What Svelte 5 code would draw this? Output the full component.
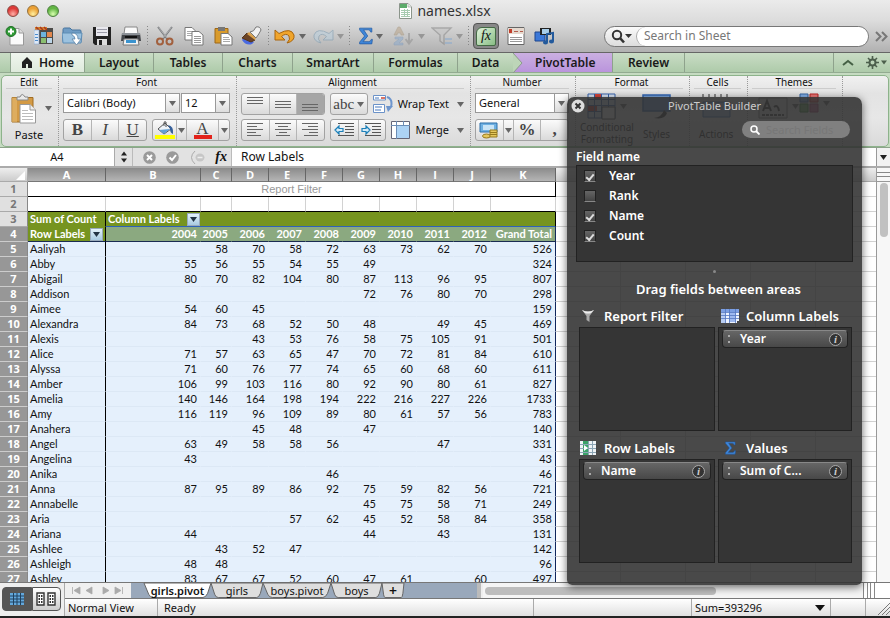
<script>
  const years = ['2004', '2005', '2006', '2007', '2008', '2009', '2010', '2011', '2012'];
  const letters = ['A', 'B', 'C', 'D', 'E', 'F', 'G', 'H', 'I', 'J', 'K'];
  const data = [
    ['Aaliyah', '', 58, 70, 58, 72, 63, 73, 62, 70, 526],
    ['Abby', 55, 56, 55, 54, 55, 49, '', '', '', 324],
    ['Abigail', 80, 70, 82, 104, 80, 87, 113, 96, 95, 807],
    ['Addison', '', '', '', '', '', 72, 76, 80, 70, 298],
    ['Aimee', 54, 60, 45, '', '', '', '', '', '', 159],
    ['Alexandra', 84, 73, 68, 52, 50, 48, '', 49, 45, 469],
    ['Alexis', '', '', 43, 53, 76, 58, 75, 105, 91, 501],
    ['Alice', 71, 57, 63, 65, 47, 70, 72, 81, 84, 610],
    ['Alyssa', 71, 60, 76, 77, 74, 65, 60, 68, 60, 611],
    ['Amber', 106, 99, 103, 116, 80, 92, 90, 80, 61, 827],
    ['Amelia', 140, 146, 164, 198, 194, 222, 216, 227, 226, 1733],
    ['Amy', 116, 119, 96, 109, 89, 80, 61, 57, 56, 783],
    ['Anahera', '', '', 45, 48, '', 47, '', '', '', 140],
    ['Angel', 63, 49, 58, 58, 56, '', '', 47, '', 331],
    ['Angelina', 43, '', '', '', '', '', '', '', '', 43],
    ['Anika', '', '', '', '', 46, '', '', '', '', 46],
    ['Anna', 87, 95, 89, 86, 92, 75, 59, 82, 56, 721],
    ['Annabelle', '', '', '', '', '', 45, 75, 58, 71, 249],
    ['Aria', '', '', '', 57, 62, 45, 52, 58, 84, 358],
    ['Ariana', 44, '', '', '', '', 44, '', 43, '', 131],
    ['Ashlee', '', 43, 52, 47, '', '', '', '', '', 142],
    ['Ashleigh', 48, 48, '', '', '', '', '', '', '', 96],
    ['Ashley', 83, 67, 67, 52, 60, 47, 61, '', 60, 497]
  ];
  const widths = [28, 78, 95, 31, 37, 37, 37, 37, 37, 37, 37, 65];
  const spare = [1, 2, 3, 4, 5];
  const tabs = [
    { name: 'Layout', w: 69 },
    { name: 'Tables', w: 69 },
    { name: 'Charts', w: 70 },
    { name: 'SmartArt', w: 81 },
    { name: 'Formulas', w: 84 }
  ];
  let fields = $state([
    { name: 'Year', on: true },
    { name: 'Rank', on: false },
    { name: 'Name', on: true },
    { name: 'Count', on: true }
  ]);
  const areas = [
    { name: 'Report Filter', icon: 'filter', item: '' },
    { name: 'Column Labels', icon: 'cols', item: 'Year' },
    { name: 'Row Labels', icon: 'rows', item: 'Name' },
    { name: 'Values', icon: 'sigma', item: 'Sum of C...' }
  ];
  const sheets = [
    { name: 'girls.pivot', w: 67 },
    { name: 'girls', w: 52 },
    { name: 'boys.pivot', w: 68 },
    { name: 'boys', w: 51 },
    { name: '+', w: 22 }
  ];
</script>

{#snippet arrow()}
  <svg class="arrow" width="7" height="5" viewBox="0 0 7 5"><path d="M0 0H7L3.500 5Z" fill="currentColor" /></svg>
{/snippet}

{#snippet lines(rows)}
  <svg width="18" height="16" viewBox="0 0 18 16">
    {#each rows as r}<path d="M{r[0]} {r[1]}.5h{r[2]}" stroke="#666" />{/each}
  </svg>
{/snippet}

{#snippet sigma(w, h)}
  <svg width={w} height={h} viewBox="0 0 12 16" preserveAspectRatio="none">
    <path d="M.5 1H11V4.500H10Q9.500 2.500 8 2.500H4L7.500 8L3.500 13H8.500Q10 13 10.500 11H11.500L11 15H.5V13.500L4.800 8L.5 2.500Z" fill="#3f86d8" stroke="#1e569f" stroke-width=".6" />
  </svg>
{/snippet}

<div class="app">
  <header class="chrome">
    <div class="titlebar">
      <div class="lights">
        <button class="light red" aria-label="Close"></button>
        <button class="light amber" aria-label="Minimise"></button>
        <button class="light green" aria-label="Zoom"></button>
      </div>
      <div class="title">
        <svg width="13" height="16" viewBox="0 0 13 16"><path d="M1 .5H9L12.500 4V15.500H.5V.5Z" fill="#fff" stroke="#8b958b" /><path d="M1 1H8V5H1Z" fill="#5cab6a" /><path d="M2 7.500H11M2 9.500H11M2 11.500H11M2 13.500H11M5.500 6V14M8.500 6V14" stroke="#a7cbb0" /><path d="M9 .5V4H12.500" fill="#e8eee8" stroke="#999" stroke-width=".6" /></svg>
        <span>names.xlsx</span>
      </div>
    </div>

    <div class="toolbar">
      <button class="tool" aria-label="New"><svg width="20" height="20" viewBox="0 0 20 20"><path d="M5 2.500H14L18.500 7V19H5Z" fill="#fbfbfb" stroke="#999" /><path d="M14 2.500V7H18.500" fill="#ddd" stroke="#999" /><circle cx="6" cy="5.500" r="5" fill="#2f9a35" stroke="#1f6f25" /><path d="M6 2.500V8.500M3 5.500H9" stroke="#fff" stroke-width="2" /></svg></button>
      <button class="tool" aria-label="Gallery"><svg width="20" height="20" viewBox="0 0 20 20"><path d="M1 2H19V18H1Z" fill="#4c4b49" /><path d="M1 1H13V4H1Z" fill="#d7852b" /><path d="M2 1L5 4M6 1L9 4M10 1L13 4" stroke="#a73720" stroke-width="1.500" /><path d="M0 4H5V18H0Z" fill="#dfe9f5" stroke="#86a6cc" stroke-width=".6" /><path d="M1 8.500H4M1 11.500H4M1 14.500H4" stroke="#4d8ccc" /><path d="M7 6H12V11H7Z" fill="#6db4de" /><path d="M13 6H18V11H13Z" fill="#e3874d" /><path d="M7 12H12V17H7Z" fill="#8abf70" /><path d="M13 12H18V17H13Z" fill="#bcd5e8" /></svg></button>
      <button class="tool" aria-label="Open"><svg width="21" height="20" viewBox="0 0 21 20"><path d="M1 3.500Q1 2 2.500 2H8L10 4H18Q19 4 19 5V16H2Q1 16 1 15Z" fill="#6f9cc4" stroke="#48759e" /><path d="M0 7H20L19 17H1Z" fill="#9cc2df" stroke="#5d8db5" /><path d="M10 7Q16 7 16 13H19L14.500 19L10 13H13Q13 10 10 9Z" fill="#fff" stroke="#517a9f" stroke-width=".7" /></svg></button>
      <button class="tool" aria-label="Save"><svg width="20" height="20" viewBox="0 0 20 20"><path d="M1 1H19V19H3L1 17Z" fill="#222" /><path d="M4 1H16V10H4Z" fill="#e8e8ee" /><path d="M5 3.500H15M5 6.500H15" stroke="#9b9ba8" /><path d="M5 13H15V19H5Z" fill="#ddd" /><path d="M7 14H10V19H7Z" fill="#222" /></svg></button>
      <button class="tool" aria-label="Print"><svg width="20" height="20" viewBox="0 0 20 20"><path d="M4 1H16L17 8H3Z" fill="#fafafa" stroke="#888" /><path d="M1 7H19L20 15H0Z" fill="#44474b" /><path d="M1 7H19V9H1Z" fill="#8c9197" /><path d="M4 10H16V12H4Z" fill="#111" /><path d="M3 13H17L18 19H2Z" fill="#f4f4f4" stroke="#777" /><path d="M5 14H15V17H5Z" fill="#3a93cf" /></svg></button>
      <span class="sep"></span>
      <button class="tool" aria-label="Cut"><svg width="20" height="20" viewBox="0 0 20 20"><path d="M3 1L13 14M17 1L7 14" stroke="#77797c" stroke-width="1.800" /><path d="M3.500 1.500L12 12M16.500 1.500L8 12" stroke="#ddd" stroke-width=".5" /><circle cx="5" cy="15.500" r="3" fill="none" stroke="#a2603e" stroke-width="2" /><circle cx="14.500" cy="15.500" r="3" fill="none" stroke="#a2603e" stroke-width="2" /></svg></button>
      <button class="tool" aria-label="Copy"><svg width="20" height="20" viewBox="0 0 20 20"><path d="M1 1.500H8L11 4.500V14H1Z" fill="#fff" stroke="#777" /><path d="M3 5.500H9M3 7.500H9M3 9.500H9" stroke="#aaa" /><path d="M8 5.500H15L19 9V19H8Z" fill="#fff" stroke="#777" /><path d="M10 10.500H17M10 12.500H17M10 14.500H17M10 16.500H17" stroke="#999" /></svg></button>
      <button class="tool" aria-label="Paste"><svg width="20" height="20" viewBox="0 0 20 20"><path d="M2 2.500H15V17H2Z" fill="#d99b2b" stroke="#9c6718" /><path d="M5 1H12V5H5Z" fill="#777" /><path d="M8 7.500H15L19 11V19H8Z" fill="#fff" stroke="#777" /><path d="M10 11.500H16M10 13.500H17M10 15.500H17" stroke="#aaa" /></svg></button>
      <button class="tool" aria-label="Format painter"><svg width="21" height="20" viewBox="0 0 21 20"><path d="M3 11L13 16L11 18Q5 20 1 14Z" fill="#4a6ae0" /><path d="M6 7L14 14L10 16L1 12Z" fill="#6b4426" stroke="#55351b" /><path d="M8 6L15 12L14 14L6 8Z" fill="#d9a04c" /><path d="M9 6Q13 6 15 1Q19 0 20 4Q18 8 15 12Z" fill="#f1f1f1" stroke="#777" /></svg></button>
      <span class="sep"></span>
      <button class="tool drop" aria-label="Undo"><svg width="22" height="20" viewBox="0 0 22 20"><path d="M1 4V14H11L7.500 10.500Q12 6.500 15 10Q17 13 13 17Q21 15 20 9Q17 1 5 7.500Z" fill="#f0a52c" stroke="#a9640d" /></svg>{@render arrow()}</button>
      <button class="tool drop faded" aria-label="Redo"><svg width="22" height="20" viewBox="0 0 22 20"><path d="M21 4V14H11L14.500 10.500Q10 6.500 7 10Q5 13 9 17Q1 15 2 9Q5 1 17 7.500Z" fill="#b9d0e0" stroke="#7395ad" /></svg>{@render arrow()}</button>
      <span class="sep"></span>
      <button class="tool drop" aria-label="AutoSum">{@render sigma(14, 18)}{@render arrow()}</button>
      <button class="tool drop faded" aria-label="Sort"><svg width="22" height="20" viewBox="0 0 22 20"><path d="M1 9L5 1H7L11 9H8L7.500 7H4.500L4 9Z" fill="#b8a184" stroke="#93805f" stroke-width=".6" /><path d="M2 11H10V13L6 17H10V19H1V17L6 13H2Z" fill="#89a9cd" stroke="#6d8fb5" stroke-width=".6" /><path d="M16 7V17M12.500 13L16 17.500L19.500 13" stroke="#8c8c8c" stroke-width="2" fill="none" /></svg>{@render arrow()}</button>
      <button class="tool drop faded" aria-label="Filter"><svg width="22" height="20" viewBox="0 0 22 20"><path d="M1 2H20L13 9V18L9 15V9Z" fill="#c4c4c4" stroke="#808080" stroke-width="1.400" /><path d="M14 13H21M14 17H21" stroke="#86a9cf" stroke-width="2" /></svg>{@render arrow()}</button>
      <span class="sep"></span>
      <button class="fxbtn" aria-label="Formula builder"><span>fx</span></button>
      <button class="tool" aria-label="Toolbox"><svg width="18" height="20" viewBox="0 0 18 20"><path d="M1 1.500H17V18.500H1Z" fill="#fff" stroke="#666" /><path d="M1 2H17V8H1Z" fill="#e5d9cf" /><path d="M2 3H5V7H2Z" fill="#c33f2c" /><path d="M7 5H11V6H7ZM13 5H16V6H13Z" fill="#b15c4c" /><path d="M3 11.500H15M3 13.500H15M3 15.500H15" stroke="#999" /></svg></button>
      <button class="tool" aria-label="Media browser"><svg width="21" height="20" viewBox="0 0 21 20"><path d="M1 6H11V15H1Z" fill="#3b78d8" stroke="#1d448c" /><path d="M6 2H17V9H6Z" fill="#222" /><path d="M8 3H15V8H8Z" fill="#a8cde8" /><path d="M13 16V8L19 7V15" stroke="#235a9c" stroke-width="2" fill="none" /><ellipse cx="11.500" cy="16.500" rx="2.500" ry="2" fill="#235a9c" /><ellipse cx="17.500" cy="15.500" rx="2.500" ry="2" fill="#235a9c" /></svg></button>
      <div class="search">
        <button class="mag" aria-label="Search options"><svg width="22" height="15" viewBox="0 0 22 15"><circle cx="6" cy="6" r="4.200" fill="none" stroke="#333" stroke-width="2" /><path d="M9 9L13 13.500" stroke="#333" stroke-width="2.600" /><path d="M14 5H21L17.500 9Z" fill="#333" /></svg></button>
        <input placeholder="Search in Sheet" aria-label="Search in Sheet" />
      </div>
      <button class="more" aria-label="More tools"><svg width="13" height="11" viewBox="0 0 13 11"><path d="M1 1L5.500 5.500L1 10M7 1L11.500 5.500L7 10" fill="none" stroke="#777" stroke-width="2" /></svg></button>
    </div>
  </header>

  <nav class="tabs">
    <span class="tabpad"></span>
    <button class="tab home"><svg width="12" height="11" viewBox="0 0 12 11"><path d="M6 0L11 5V11H7V7H5V11H1V5Z" fill="#222" /></svg>Home</button>
    {#each tabs as t}<button class="tab" style="width:{t.w}px">{t.name}</button>{/each}
    <button class="tab data">Data</button>
    <button class="tab pivot"><svg width="12" height="20" viewBox="0 0 12 20"><path d="M0 0L9 10L0 20Z" fill="#bdd5b8" /><path d="M0 0L9 10L0 20" fill="none" stroke="#8b9b8b" /></svg>PivotTable</button>
    <button class="tab review">Review</button>
    <div class="tabtools">
      <button aria-label="Collapse ribbon"><svg width="12" height="8" viewBox="0 0 12 8"><path d="M1 6L6 2L11 6" fill="none" stroke="#456045" stroke-width="2" /></svg></button>
      <button aria-label="Ribbon settings"><svg width="22" height="13" viewBox="0 0 22 13"><circle cx="6.500" cy="6.500" r="3" fill="none" stroke="#4c5f4c" stroke-width="2" /><path d="M6.500 0V3M6.500 10V13M0 6.500H3M10 6.500H13M2 2L4 4M9 9L11 11M11 2L9 4M4 9L2 11" stroke="#4c5f4c" stroke-width="1.600" /><path d="M15 4.500H21L18 8.500Z" fill="#4c5f4c" /></svg></button>
    </div>
  </nav>

  <section class="ribbonwrap">
    <div class="ribbon">
      <div class="group edit">
        <h2>Edit</h2>
        <button class="paste">
          <span class="pasteicon"><svg width="26" height="31" viewBox="0 0 26 31"><path d="M1 4.500H22V29H1Z" fill="#d39a45" stroke="#a06c22" /><path d="M1 4.500H6V29H1Z" fill="#e6bb72" opacity=".6" /><path d="M6 7V4H9Q11 -1 14 4H17V7Z" fill="#e9e9e9" stroke="#888" /><path d="M9 11.500H19L24.500 17V30H9Z" fill="#fff" stroke="#999" /><path d="M19 11.500V17H24.500" fill="#eee" stroke="#999" /><path d="M11 17.500H17M11 20.500H22M11 23.500H22M11 26.500H22" stroke="#bbb" /></svg>{@render arrow()}</span>
          <span>Paste</span>
        </button>
      </div>
      <div class="group font">
        <h2>Font</h2>
        <div class="row">
          <label class="combo grow"><select aria-label="Font name"><option>Calibri (Body)</option></select><span>{@render arrow()}</span></label>
          <label class="combo size"><select aria-label="Font size"><option>12</option></select><span>{@render arrow()}</span></label>
        </div>
        <div class="row wide">
          <div class="seg three"><button class="ser"><b>B</b></button><button class="ser"><i>I</i></button><button class="ser"><u>U</u></button></div>
          <div class="seg paint">
            <button aria-label="Fill colour"><svg width="20" height="20" viewBox="0 0 20 20"><path d="M3 9L10 3L16 9L9 14Z" fill="#eef3f8" stroke="#555" /><path d="M4 10L15 9L9 14Z" fill="#63a0d4" /><path d="M9 6V3Q9 1 11 2V7" fill="none" stroke="#555" /><path d="M13 5Q19 6 18 14Q15 13 15 9Z" fill="#355f99" /><path d="M0 15H20V19H0Z" fill="#ffff00" /></svg></button>
            <button class="thin" aria-label="Fill colour menu">{@render arrow()}</button>
            <button class="ser acol" aria-label="Font colour">A</button>
            <button class="thin" aria-label="Font colour menu">{@render arrow()}</button>
          </div>
        </div>
      </div>
      <div class="group align">
        <h2>Alignment</h2>
        <div class="row wide">
          <div class="seg three">
            <button aria-label="Top">{@render lines([[1, 1, 16], [1, 4, 16], [1, 7, 16]])}</button>
            <button aria-label="Middle">{@render lines([[1, 5, 16], [1, 8, 16], [1, 11, 16]])}</button>
            <button class="on" aria-label="Bottom">{@render lines([[1, 8, 16], [1, 11, 16], [1, 14, 16]])}</button>
          </div>
          <div class="seg abc"><button class="ser">abc{@render arrow()}</button></div>
          <button class="flat"><svg width="20" height="20" viewBox="0 0 20 20"><path d="M.5 1.500H12.500V6H.5ZM.5 10.500H11.500V18.500H.5Z" fill="#fff" stroke="#6b92c8" /><path d="M2 4H6M2 13H9M2 16H8" stroke="#4678be" /><path d="M8 4H12" stroke="#d0452f" stroke-width="1.500" /><path d="M14 3Q20 5 18 13" fill="none" stroke="#6d95cd" stroke-width="2" /><path d="M13 12H20L15 18Z" fill="#6d95cd" /></svg>Wrap Text{@render arrow()}</button>
        </div>
        <div class="row wide">
          <div class="seg three">
            <button aria-label="Left">{@render lines([[1, 1, 16], [1, 4, 10], [1, 7, 16], [1, 10, 9], [1, 13, 14]])}</button>
            <button aria-label="Center">{@render lines([[1, 1, 16], [4, 4, 10], [1, 7, 16], [5, 10, 8], [2, 13, 14]])}</button>
            <button aria-label="Right">{@render lines([[1, 1, 16], [7, 4, 10], [1, 7, 16], [8, 10, 9], [3, 13, 14]])}</button>
          </div>
          <div class="seg two">
            {#each [0, 1] as k}
              <button aria-label={k ? 'Increase indent' : 'Decrease indent'}><svg width="21" height="16" viewBox="0 0 21 16"><path d="M4 1.500H20M11 4.500H20M11 7.500H20M11 10.500H20M4 13.500H20" stroke="#555" /><path d={k ? 'M9 8L5 4V6.500H1V9.500H5V12Z' : 'M1 8L5 4V6.500H9V9.500H5V12Z'} fill="#d6ecf8" stroke="#1d80b9" stroke-width="1.200" /></svg></button>
            {/each}
          </div>
          <button class="flat merge"><svg width="19" height="18" viewBox="0 0 19 18"><path d="M.5 .5H18.500V17.500H.5Z" fill="#fff" stroke="#667" /><path d="M6 5H18V17H6Z" fill="#add3f5" /><path d="M5.500 0V18M0 4.500H19M12.500 0V4" stroke="#6c8db5" /></svg>Merge{@render arrow()}</button>
        </div>
      </div>
      <div class="group number">
        <h2>Number</h2>
        <div class="row"><label class="combo grow"><select aria-label="Number format"><option>General</option></select><span>{@render arrow()}</span></label></div>
        <div class="row">
          <div class="seg num">
            <button aria-label="Currency"><svg width="20" height="17" viewBox="0 0 20 17"><path d="M1 1H18V10H1Z" fill="#6fb1e3" stroke="#2d6ea8" /><path d="M4 3H15V8H4Z" fill="#c9e4f6" /><ellipse cx="7.500" cy="14" rx="4" ry="2" fill="#e4c75c" stroke="#967a1e" /><path d="M11 8V15H18V8Z" fill="#e4c75c" stroke="#967a1e" /><path d="M11 10.500H18M11 12.500H18" stroke="#967a1e" /></svg></button>
            <button class="thin" aria-label="Currency menu">{@render arrow()}</button>
            <button class="ser">%</button><button class="ser">,</button>
          </div>
        </div>
      </div>
      <div class="group format">
        <h2>Format</h2>
        <div class="bigs">
          <button class="big"><span><svg width="29" height="27" viewBox="0 0 29 27"><path d="M1 1H28V25H1Z" fill="#dce8f8" stroke="#3763ac" /><path d="M7 1H14V6H7ZM1 12H10V18H1Z" fill="#d6443a" /><path d="M1 6.500H28M1 12.500H28M1 18.500H28M7.500 1V25M14.500 1V25M21.500 1V25" stroke="#3763ac" /><path d="M15 14H28V26H15Z" fill="#fff" stroke="#444" /></svg>{@render arrow()}</span>Conditional<br />Formatting</button>
          <button class="big"><svg width="29" height="27" viewBox="0 0 29 27"><path d="M1 2H28V18H1Z" fill="#7aa6de" stroke="#3367b5" stroke-width="1.500" /><path d="M12 25Q20 24 22 17L25 20Q23 27 12 25Z" fill="#333" /></svg><em>Styles</em></button>
        </div>
      </div>
      <div class="group cells">
        <h2>Cells</h2>
        <div class="bigs"><button class="big"><svg width="29" height="27" viewBox="0 0 29 27"><path d="M1 1V4M7 1V4M13 1V4M19 1V4M25 1V4" stroke="#333" /><path d="M1 9H28V24H1Z" fill="#a8c6ec" stroke="#3a6cb5" /></svg><em>Actions</em></button></div>
      </div>
      <div class="group themes">
        <h2>Themes</h2>
        <div class="bigs gap">
          <button class="big" aria-label="Themes"><span><svg width="30" height="27" viewBox="0 0 30 27"><path d="M1 5H29V25H1Z" fill="#ddd" stroke="#777" /><path d="M5 18L9 8L13 18M7 15H11M16 14Q20 11 21 18" fill="none" stroke="#333" stroke-width="2" /><path d="M4 22H26" stroke="#444" stroke-dasharray="3 1" stroke-width="2" /></svg>{@render arrow()}</span></button>
          <button class="big" aria-label="Colors"><span><svg width="20" height="20" viewBox="0 0 20 20"><path d="M1 1H9V9H1Z" fill="#85b3ed" stroke="#3465a4" /><path d="M11 1H19V9H11Z" fill="#ef7979" stroke="#b22" /><path d="M1 11H9V19H1Z" fill="#75b96b" stroke="#373" /><path d="M11 11H19V19H11Z" fill="#d06d9d" stroke="#a33b68" /></svg>{@render arrow()}</span></button>
        </div>
      </div>
    </div>
  </section>

  <div class="formula">
    <input class="namebox" value="A4" aria-label="Name box" />
    <div class="stepper"><svg width="6" height="12" viewBox="0 0 6 12"><path d="M0 4.500L3 .5L6 4.500ZM0 7.500L3 11.500L6 7.500Z" fill="#222" /></svg></div>
    <div class="fxtools">
      <svg width="13" height="13" viewBox="0 0 13 13"><circle cx="6.500" cy="6.500" r="6.300" fill="#9a9a9a" /><path d="M4 4L9 9M9 4L4 9" stroke="#fff" stroke-width="2" /></svg>
      <svg width="13" height="13" viewBox="0 0 13 13"><circle cx="6.500" cy="6.500" r="6.300" fill="#9a9a9a" /><path d="M3.500 6.500L6 9L10 4" stroke="#fff" stroke-width="2" fill="none" /></svg>
      <svg width="15" height="15" viewBox="0 0 15 15"><path d="M5 1Q-2 7.500 5 14" fill="none" stroke="#aaa" /><ellipse cx="10" cy="7.500" rx="4.500" ry="4" fill="#c6c6c6" /><path d="M7.500 7.500H12.500" stroke="#eee" stroke-width="1.500" /></svg>
      <span class="fx">fx</span>
    </div>
    <input class="fbox" value="Row Labels" aria-label="Formula" />
    <button class="fdrop" aria-label="Expand formula bar">{@render arrow()}</button>
  </div>

  <main class="sheet">
    <div class="gridwrap">
      <table>
        <colgroup>
          {#each widths as w}<col style="width:{w}px" />{/each}
          {#each spare as s}<col style="width:65px" />{/each}
        </colgroup>
        <thead>
          <tr><th class="corner"><svg width="9" height="9" viewBox="0 0 9 9"><path d="M9 0V9H0Z" fill="#fff" /></svg></th>{#each letters as l}<th>{l}</th>{/each}{#each spare as s}<th class="plain"></th>{/each}</tr>
        </thead>
        <tbody>
          <tr class="r1"><th>1</th><td colspan="11">Report Filter</td>{#each spare as s}<td></td>{/each}</tr>
          <tr class="r2"><th>2</th>{#each letters as l}<td></td>{/each}{#each spare as s}<td></td>{/each}</tr>
          <tr class="r3"><th>3</th><td class="hd sum">Sum of Count</td><td class="hd span" colspan="10"><span class="lab med">Column Labels<button class="dd" aria-label="Column filter">{@render arrow()}</button></span></td>{#each spare as s}<td></td>{/each}</tr>
          <tr class="r4"><th>4</th><td class="hd first"><span class="lab">Row Labels<button class="dd" aria-label="Row filter">{@render arrow()}</button></span></td>{#each years as y}<td class="yr">{y}</td>{/each}<td class="yr last">Grand Total</td>{#each spare as s}<td></td>{/each}</tr>
          {#each data as row, i}
            <tr class="d"><th>{i + 5}</th>{#each row as v, j}<td class:name={j === 0} class:last={j === 10} class="v">{v}</td>{/each}{#each spare as s}<td></td>{/each}</tr>
          {/each}
        </tbody>
      </table>
    </div>
    <div class="vscroll"><div class="vsplit"></div><div class="thumb"></div></div>
  </main>

  <footer>
    <div class="views">
      <button class="on" aria-label="Normal view"><svg width="16" height="14" viewBox="0 0 16 14"><path d="M1 1H15V13H1Z" fill="#63a8dc" /><path d="M1 4H15M1 7H15M1 10H15M4.500 1V13M8 1V13M11.500 1V13" stroke="#20415f" /></svg></button>
      <button aria-label="Page layout view"><svg width="20" height="14" viewBox="0 0 20 14"><path d="M1 1H8V13H1ZM12 1H19V13H12Z" fill="#fff" stroke="#333" stroke-width="1.400" /><path d="M2.500 4H7M2.500 7H7M2.500 10H7M13.500 4H18M13.500 7H18M13.500 10H18" stroke="#333" stroke-width="2" stroke-dasharray="1.500 1" /></svg></button>
    </div>
    <div class="bottom">
      <div class="sheetbar">
        <div class="sheetnav"><svg width="54" height="9" viewBox="0 0 54 9"><path d="M1.500 1V8M9 1V8L3 4.500ZM21 1V8L15 4.500ZM32 1V8L38 4.500ZM44 1V8L50 4.500ZM51.500 1V8" fill="#aaa" stroke="#aaa" stroke-width=".8" /></svg></div>
        <div class="sheettabs">
          {#each sheets as s, i}
            <button class:cur={i === 0} class:plus={i === 4} style="width:{s.w}px"><svg viewBox="0 0 100 16" preserveAspectRatio="none"><path d="M0 0L7 12Q9 15.500 14 15.500H88Q92 15.500 95 11L100 0Z" fill={i === 0 ? '#fff' : '#dedede'} stroke="#666" vector-effect="non-scaling-stroke" /></svg><span>{s.name}</span></button>
          {/each}
        </div>
        <div class="hsplit"></div>
        <div class="hscroll"><div class="hthumb"></div></div>
        <div class="hgrip"></div>
        <div class="hend"></div>
      </div>
      <div class="status">
        <span class="s1">Normal View</span><span class="s2">Ready</span><span class="s3"></span>
        <label class="s4"><select aria-label="Summary"><option>Sum=393296</option></select><svg width="10" height="6" viewBox="0 0 10 6"><path d="M0 0H10L5 6Z" fill="#111" /></svg></label>
        <span class="s5"></span>
        <span class="s6"><svg width="12" height="12" viewBox="0 0 12 12"><path d="M0 12L12 0M4 12L12 4M8 12L12 8" stroke="#777" /></svg></span>
      </div>
    </div>
  </footer>
  <div class="desk"></div>

  <aside class="panel">
    <div class="ptitle">
      <button aria-label="Close builder"><svg width="14" height="14" viewBox="0 0 14 14"><circle cx="7" cy="7" r="6.500" fill="#ddd" /><path d="M4.500 4.500L9.500 9.500M9.500 4.500L4.500 9.500" stroke="#333" stroke-width="2" /></svg></button>
      <h1>PivotTable Builder</h1>
    </div>
    <label class="psearch"><svg width="10" height="10" viewBox="0 0 10 10"><circle cx="4" cy="4" r="3" fill="none" stroke="#fff" stroke-width="1.500" /><path d="M6 6L9.500 9.500" stroke="#fff" stroke-width="1.800" /></svg><input placeholder="Search Fields" aria-label="Search fields" /></label>
    <h3>Field name</h3>
    <div class="fields">
      {#each fields as f}
        <label><input type="checkbox" bind:checked={f.on} /><span>{f.name}</span></label>
      {/each}
    </div>
    <div class="dot"></div>
    <p>Drag fields between areas</p>
    <div class="areas">
      {#each areas as a}
        <div class="area">
          <h4>
            {#if a.icon === 'filter'}<svg width="18" height="16" viewBox="0 0 18 16"><path d="M3 2Q9 5 15 2L10.500 8V14L7.500 12V8Z" fill="#aaa" /><path d="M3 2Q9 5 15 2L12 5Q9 6 6 5Z" fill="#eee" /></svg>
            {:else if a.icon === 'cols'}<svg width="18" height="16" viewBox="0 0 18 16"><path d="M0 1H5V15H0Z" fill="#b9cdf2" /><path d="M5 1H18V13H16V15H5Z" fill="#eef4ff" /><path d="M0 1H18V4H0Z" fill="#7c9fe2" /><path d="M8 4H15V14H8Z" fill="#9fbaf0" /><path d="M0 4.500H18M0 7.500H18M0 10.500H18M4.500 1V15M8.500 1V15M14.500 1V15" stroke="#5577c0" stroke-width=".8" /></svg>
            {:else if a.icon === 'rows'}<svg width="18" height="16" viewBox="0 0 18 16"><path d="M1 1H17V15H1Z" fill="#eef3f6" /><path d="M4 1H9V15H4Z" fill="#3aa268" /><path d="M1 4.500H17M1 8.500H17M1 12.500H17M9.500 1V15M13.500 1V15" stroke="#8ba5b5" /><path d="M5 5L9 8L5 11" fill="#fff" /></svg>
            {:else}<span class="sig">{@render sigma(11, 14)}</span>{/if}
            {a.name}
          </h4>
          <div class="well">
            {#if a.item}<div class="chip"><i class="grip"></i><span>{a.item}</span><button aria-label="Field info">i</button></div>{/if}
          </div>
        </div>
      {/each}
    </div>
  </aside>
</div>

<style>
  :global(body) { margin: 0; }
  * { box-sizing: border-box; }
  .app { position: relative; display: flex; flex-direction: column; height: 100vh; overflow: hidden; font: 11px/14px "Lucida Grande", "Noto Sans", "Open Sans", sans-serif; color: #111; background: #e4e4e4; }
  button, input, select { font: inherit; color: inherit; margin: 0; padding: 0; border: 0; background: none; border-radius: 0; outline: 0; }
  select { appearance: none; width: 100%; }
  svg { flex: none; display: block; }
  h1, h2, h3, h4, p { margin: 0; font-weight: normal; }
  .arrow { color: #666; }

  .chrome { flex: none; height: 53px; background: linear-gradient(#ebebeb, #dcdcdc 40%, #b1b1b1); border-bottom: 1px solid #666; }
  .titlebar { height: 21px; display: flex; align-items: center; position: relative; }
  .lights { display: flex; gap: 8px; padding-left: 7px; }
  .light { width: 12px; height: 12px; border-radius: 50%; border: 1px solid #8a4a44; }
  .red { background: radial-gradient(circle at 50% 80%, #ffb0a8, #dd3a38 60%); }
  .amber { background: radial-gradient(circle at 50% 80%, #fff0a0, #eba034 60%); border-color: #94703b; }
  .green { background: radial-gradient(circle at 50% 80%, #d9ffb0, #62b544 60%); border-color: #4d8040; }
  .title { position: absolute; inset: 0; display: flex; justify-content: center; align-items: center; gap: 5px; font-size: 14px; pointer-events: none; color: #333; }
  .toolbar { height: 30px; display: flex; align-items: center; padding: 0 2px 0 0; }
  .tool { width: 29px; height: 22px; display: flex; align-items: center; justify-content: center; }
  .tool.drop { width: 38px; gap: 3px; }
  .faded { opacity: .5; }
  .sep { width: 5px; height: 20px; background: linear-gradient(90deg, transparent 2px, #888 2px, #888 3px, transparent 3px); -webkit-mask: repeating-linear-gradient(#000 0 1px, transparent 1px 3px); }
  .fxbtn { width: 26px; height: 26px; border-radius: 4px; border: 1px solid #555; background: #888; display: flex; align-items: center; justify-content: center; margin: 0 2px; }
  .fxbtn span { width: 20px; height: 19px; border-radius: 6px 2px 2px 2px; background: linear-gradient(135deg, #e1f3dc, #88bd84); border: 1px solid #446a45; font: italic 14px/16px "Liberation Serif", serif; }
  .search { flex: 1; height: 21px; margin-left: 45px; border: 1px solid #777; border-radius: 11px; background: linear-gradient(#fafafa, #ddd); display: flex; overflow: hidden; }
  .mag { width: 31px; padding-left: 6px; flex: none; }
  .search input { flex: 1; min-width: 0; background: #fff; border-left: 1px solid #aaa; border-radius: 10px; padding-left: 7px; font-size: 12px; }
  .search input::placeholder { color: #777; opacity: 1; }
  .more { width: 19px; padding-left: 6px; }

  .tabs { flex: none; height: 20px; display: flex; background: linear-gradient(#c9dcc5, #aecbaa); border-bottom: 1px solid #93ab91; }
  .tabpad { width: 11px; border-right: 1px solid #8fa58f; }
  .tab { border-right: 1px solid #8ea28c; font-size: 12px; font-weight: 600; display: flex; align-items: center; justify-content: center; flex: none; color: #1a1a1a; }
  .home { width: 74px; gap: 6px; background: linear-gradient(#f0f6ef, #deeadc); }
  .data { width: 55px; border: 0; }
  .pivot { width: 100px; background: linear-gradient(#cbb0e2, #ba94dc); gap: 10px; justify-content: flex-start; }
  .review { width: 72px; }
  .tabtools { margin-left: auto; display: flex; align-items: center; gap: 12px; padding: 0 2px 0 8px; border-left: 1px solid #8ea28c; }

  .ribbonwrap { flex: none; height: 75px; padding: 2px 1px 1px; background: #c5dbc1; border-bottom: 1px solid #8da38b; }
  .ribbon { height: 72px; border: 1px solid #8db38b; border-radius: 5px; background: linear-gradient(#f1f1f1, #e3e3e3 25%, #e7e7e7 60%, #dadada); display: flex; overflow: hidden; }
  .group { flex: none; padding: 0 6px 0 4px; border-right: 1px dotted #999; }
  .group h2 { font-size: 10px; line-height: 12px; height: 13px; margin-bottom: 4px; text-align: center; border-bottom: 1px solid #ccc; }
  .edit { width: 57px; }
  .font { width: 178px; }
  .align { width: 234px; }
  .number { width: 105px; }
  .format { width: 114px; }
  .cells { width: 58px; }
  .themes { width: 95px; }
  .row { display: flex; gap: 1px; height: 26px; align-items: flex-start; }
  .row.wide { gap: 5px; }
  .paste { display: flex; flex-direction: column; width: 100%; align-items: center; gap: 4px; }
  .pasteicon { display: flex; align-items: center; gap: 8px; align-self: flex-start; padding-left: 5px; }
  .combo { position: relative; height: 20px; border: 1px solid #999; background: #fff; display: block; }
  .combo.grow { flex: 1; }
  .combo.size { width: 49px; }
  .combo select { height: 18px; padding-left: 3px; font-size: 11px; }
  .combo span { position: absolute; right: 0; top: 0; bottom: 0; width: 14px; border-left: 1px solid #999; background: linear-gradient(#fff, #ddd); display: flex; align-items: center; justify-content: center; pointer-events: none; }
  .seg { display: flex; height: 22px; border: 1px solid #a2a2a2; border-radius: 3px; background: linear-gradient(#fbfbfb, #dadada); overflow: hidden; }
  .seg button { flex: 1; border-right: 1px solid #b5b5b5; display: flex; align-items: center; justify-content: center; gap: 3px; }
  .seg button:last-child { border-right: 0; }
  .seg button.thin { flex: 0 0 10px; }
  .seg button.on { background: #a6a6a6; }
  .three { width: 84px; }
  .two { width: 57px; }
  .paint { flex: 1; }
  .num { flex: 1; }
  .abc { width: 38px; }
  .ser { font: 17px/20px "Liberation Serif", serif; color: #444; }
  .abc .ser { font-size: 15px; }
  .seg button.acol { line-height: 14px; padding: 0 4px 2px; background: linear-gradient(#e3231b, #e3231b) center bottom 1px / 18px 4px no-repeat; }
  .num .ser { font-weight: bold; }
  .flat { display: flex; align-items: center; height: 22px; gap: 5px; white-space: nowrap; }
  .flat .arrow { margin-left: 3px; }
  .bigs { display: flex; justify-content: space-between; padding: 0 6px; }
  .cells .bigs { padding: 0 5px; }
  .format .bigs { padding: 0 12px 0 0; }
  .big { font-size: 10px; line-height: 12px; display: flex; flex-direction: column; align-items: center; gap: 1px; color: #222; }
  .big span { display: flex; align-items: center; gap: 4px; }
  .big em { font-style: normal; padding-top: 7px; }

  .formula { flex: none; height: 20px; display: flex; background: #e2e2e2; border-bottom: 2px solid #ababab; }
  .namebox { width: 115px; background: #fff; text-align: center; border-right: 1px solid #aaa; }
  .stepper { width: 18px; display: flex; align-items: center; justify-content: center; border-right: 1px solid #bbb; }
  .fxtools { width: 99px; display: flex; align-items: center; justify-content: space-between; padding: 0 4px 0 10px; border-right: 1px solid #bbb; }
  .fx { font: italic bold 14px/16px "Liberation Serif", serif; }
  .fbox { flex: 1; min-width: 0; background: #fff; padding-left: 9px; font-size: 12px; }
  .fdrop { width: 14px; border-left: 1px solid #999; background: #f2f2f2; display: flex; align-items: center; justify-content: center; }
  .fdrop .arrow { color: #222; }

  .sheet { flex: 1; min-height: 0; display: flex; background: #fff; }
  .gridwrap { flex: 1; min-width: 0; overflow: hidden; }
  table { table-layout: fixed; border-collapse: separate; border-spacing: 0; width: 881px; font-family: Lato, "Open Sans", sans-serif; }
  th, td { height: 15px; padding: 0; line-height: 14px; overflow: hidden; white-space: nowrap; border-bottom: 1px solid #d2d2d2; border-right: 1px solid #d2d2d2; }
  thead th { height: 14px; line-height: 13px; background: linear-gradient(#8b8b8b, #b5b5b5); color: #fff; border-right: 1px solid #666; border-bottom: 1px solid #777; font: bold 11px/13px "Open Sans", sans-serif; }
  thead th.corner, thead th.plain { background: linear-gradient(#eee, #ccc); border-color: #aaa; }
  .corner svg { margin: 2px 2px 0 auto; }
  tbody th { font: bold 11px/14px "Open Sans", sans-serif; background: #e0e0e0; color: #777; border-right: 1px solid #888; border-bottom-color: #aaa; }
  .r4 th, .d th { background: #979797; color: #fff; border-bottom-color: #ccc; }
  .r1 td:nth-child(2) { text-align: center; font-family: "Liberation Sans", sans-serif; color: #999; border-bottom: 1px solid #000; border-right: 1px solid #000; }
  .r2 td:nth-child(-n+12) { border-bottom-color: #000; }
  .hd { background: #76941f; color: #fff; font-weight: bold; padding-left: 2px; }
  .sum { border-color: #76941f; border-right-color: #000; }
  .span { border-bottom: 1px solid #2e62b8; border-right-color: #000; }
  .lab { display: flex; align-items: center; justify-content: space-between; height: 14px; }
  .lab.med { justify-content: flex-start; gap: 7px; }
  .dd { width: 13px; height: 13px; background: linear-gradient(#e3f2fb, #a9cbe2); border: 1px solid #9ab; display: flex; align-items: center; justify-content: center; }
  .dd .arrow { color: #234; }
  .first { border-right-color: #000; border-bottom-color: #1a2c52; padding-right: 2px; }
  .yr { background: #8ba980; color: #fff; font-weight: bold; text-align: right; padding-right: 3px; border-right-color: #8ba980; border-bottom-color: #1a2c52; }
  .yr.last { border-right-color: #15295a; }
  .v { background: #e5f0fc; border-color: #e5f0fc; border-bottom-color: #dce8f5; text-align: right; padding-right: 3px; }
  .v.name { text-align: left; padding-left: 2px; border-right-color: #000; }
  .v.last { border-right: 1px solid #10265c; }
  .vscroll { width: 14px; border-left: 1px solid #999; background: #f7f7f7; }
  .vsplit { height: 14px; border-bottom: 1px solid #999; background: linear-gradient(transparent 4px, #888 4px, #888 5px, transparent 5px, transparent 8px, #888 8px, #888 9px, transparent 9px); }
  .thumb { width: 8px; height: 54px; margin: 1px 0 0 3px; border-radius: 4px; background: #c1c1c1; }

  footer { flex: none; height: 34px; display: flex; border-top: 1px solid #777; background: #eee; }
  .views { width: 65px; padding: 4px 3px 5px 2px; display: flex; border-right: 1px solid #aaa; }
  .views button { flex: 1; border: 1px solid #555; border-radius: 0 4px 4px 0; background: linear-gradient(#fff, #ccc); display: flex; align-items: center; justify-content: center; }
  .views button.on { background: #555; border-radius: 4px 0 0 4px; }
  .bottom { flex: 1; min-width: 0; display: flex; flex-direction: column; }
  .sheetbar { height: 16px; display: flex; background: #99a8bb; border-bottom: 1px solid #777; }
  .sheetnav { width: 66px; background: #f0f0f0; display: flex; align-items: center; justify-content: center; }
  .sheettabs { flex: 1; display: flex; padding-left: 13px; }
  .sheettabs button { position: relative; height: 15px; flex: none; }
  .sheettabs svg { position: absolute; inset: 0; width: 100%; height: 100%; overflow: visible; }
  .sheettabs span { position: relative; line-height: 14px; display: block; }
  .sheettabs .cur { font-weight: 600; z-index: 1; }
  .sheettabs .plus { font-size: 14px; font-weight: 600; }
  .hsplit { width: 6px; background: #bbb; border-right: 2px solid #eee; }
  .hscroll { width: 380px; background: #f5f5f5; padding: 4px 0 0 2px; }
  .hthumb { width: 61%; height: 8px; border-radius: 4px; background: #bdbdbd; }
  .hgrip { width: 12px; border: solid #888; border-width: 0 1px; background: linear-gradient(90deg, transparent 3px, #888 3px, #888 4px, transparent 4px, transparent 6px, #888 6px, #888 7px, transparent 7px) #fff; }
  .hend { width: 15px; background: #fff; }
  .status { flex: 1; display: flex; background: linear-gradient(#fff, #e0e0e0); }
  .status > * { border-right: 1px solid #aaa; padding-left: 3px; line-height: 17px; }
  .s1 { width: 93px; }
  .status .s2 { flex: 1; padding-left: 6px; }
  .s3 { width: 158px; }
  .s4 { width: 139px; display: flex; align-items: center; padding-right: 5px; }
  .s5 { width: 35px; }
  .status .s6 { width: 24px; border: 0; padding: 4px 0 0 12px; }
  .desk { flex: none; height: 2px; background: #222; }

  .panel { position: absolute; top: 97px; right: 28px; width: 295px; height: 488px; padding: 0 9px; border-radius: 7px 7px 5px 5px; background: rgba(50, 50, 50, .89); box-shadow: 0 2px 8px rgba(0, 0, 0, .6); color: #fff; }
  .ptitle { height: 24px; display: flex; align-items: flex-start; margin: 0 -9px; padding: 2px 18px 2px 4px; }
  .ptitle h1 { flex: 1; font-size: 11px; text-align: center; color: #ccc; }
  .psearch { display: flex; align-items: center; gap: 6px; width: 108px; height: 17px; margin-left: auto; margin-right: 3px; padding-left: 8px; border-radius: 9px; background: #808080; }
  .psearch input { flex: 1; min-width: 0; }
  .psearch input::placeholder { color: #777; opacity: 1; }
  .panel h3 { font-size: 12px; font-weight: 600; line-height: 16px; margin-top: 11px; }
  .fields { height: 97px; background: #353535; border: 1px solid #222; padding-left: 7px; }
  .fields label { display: flex; align-items: center; gap: 13px; height: 20px; font-size: 12px; font-weight: 600; }
  .fields input { appearance: none; width: 12px; height: 12px; background: linear-gradient(#666, #444); border: 1px solid #222; border-bottom: 1px solid #888; display: grid; place-items: center; }
  .fields input:checked::after { content: ""; width: 6px; height: 3px; border: solid #ddd; border-width: 0 0 2px 2px; transform: rotate(-50deg); }
  .dot { width: 3px; height: 3px; margin: 8px auto 7px; background: #888; border-radius: 2px; }
  .panel p { text-align: center; font-size: 13px; font-weight: 600; line-height: 18px; padding-left: 8px; }
  .areas { display: grid; grid-template-columns: 136px 1fr; column-gap: 3px; padding: 7px 1px 0 3px; }
  .area { height: 132px; }
  .area h4 { display: flex; align-items: center; gap: 7px; height: 22px; font-size: 13px; font-weight: 600; }
  .area:nth-child(even) h4 { padding-left: 3px; }
  .sig { width: 18px; padding-left: 4px; }
  .well { height: 104px; background: #353535; border: 1px solid #222; padding: 2px 3px; }
  .chip { display: flex; align-items: center; height: 18px; border: 1px solid #222; border-top-color: #888; border-radius: 4px; background: linear-gradient(#666, #484848); padding: 0 5px; font-size: 12px; font-weight: 600; }
  .chip span { flex: 1; }
  .chip button { width: 13px; height: 13px; border: 1px solid #aaa; color: #ccc; border-radius: 50%; background: #333; font: italic bold 11px/11px "Liberation Serif", serif; }
  .grip { width: 2px; height: 8px; border: solid #aaa; border-width: 2px 0; margin-right: 10px; }
</style>
